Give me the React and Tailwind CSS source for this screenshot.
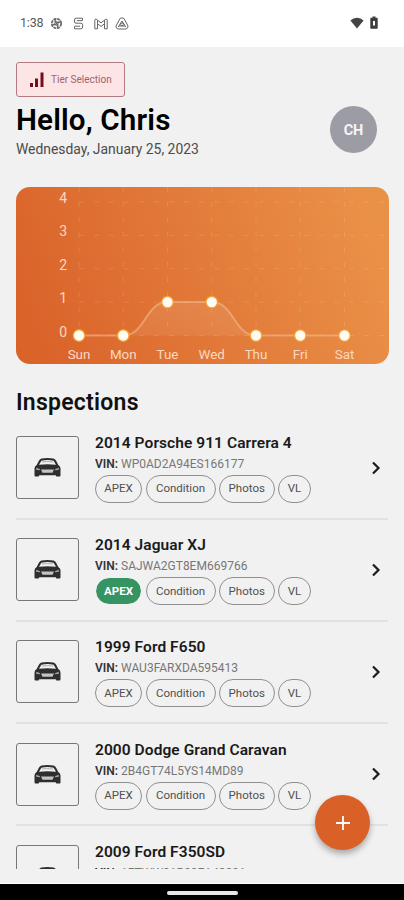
import React from 'react';

const days = ['Sun', 'Mon', 'Tue', 'Wed', 'Thu', 'Fri', 'Sat'];
const counts = [0, 0, 1, 1, 0, 0, 0];

const inspections = [
  { title: '2014 Porsche 911 Carrera 4', vin: 'WP0AD2A94ES166177', apex: false },
  { title: '2014 Jaguar XJ', vin: 'SAJWA2GT8EM669766', apex: true },
  { title: '1999 Ford F650', vin: 'WAU3FARXDA595413', apex: false },
  { title: '2000 Dodge Grand Caravan', vin: '2B4GT74L5YS14MD89', apex: false },
  { title: '2009 Ford F350SD', vin: '1FTWW31R29EA48291', apex: false },
];

const StatusBar = () => (
  <div className="flex h-[47px] shrink-0 items-center bg-white pl-5 pr-[26px] text-[#666]">
    <span className="w-[30px] text-[12.5px] leading-none tracking-[-0.2px] text-[#5a5a5a]">1:38</span>
    {/* Notifications */}
    <svg width="13" height="13" viewBox="0 0 13 13" fill="none" stroke="currentColor" strokeWidth="1.7">
      <circle cx="6.5" cy="6.5" r="4.7" strokeDasharray="3 0.7" />
      <path d="M4 1.5 6.5 5M11 4 7.5 6.5M9 11.5 6.5 8M1.5 9 5 6.5M4.5 4.5l4 4M8.5 4.5l-4 4" strokeWidth="1.2" />
    </svg>
    <svg className="ml-[10px]" width="11" height="13" viewBox="0 0 11 13" fill="none" stroke="currentColor" strokeWidth="1">
      <path d="M9.5 3.5V1.2H3.2Q1.5 1.2 1.5 3V5Q1.5 6.2 3 6.2H8Q9.6 6.2 9.6 7.8V10Q9.6 11.8 7.8 11.8H1.5V9.4M3.8 3.6H9.5M1.5 9.2H7.2" />
    </svg>
    <svg className="ml-[10px]" width="14" height="12" viewBox="0 0 14 12" fill="none" stroke="currentColor" strokeWidth="1">
      <path d="M.8 10.8V2.2Q.8.8 2.2 1.2L7 4.8 11.8 1.2Q13.2.8 13.2 2.2V10.8H10.5V5.8L7 8.4 3.5 5.8V10.8ZM3.5 2.2V5.8M10.5 2.2V5.8" />
    </svg>
    <svg className="ml-[7px]" width="14" height="13" viewBox="0 0 14 13" fill="none" stroke="currentColor" strokeWidth="1">
      <path d="M5 1.5Q7 .2 9 1.5L13 9Q13.3 11.4 11 12H3Q.7 11.4 1 9Z" />
      <path d="M7 4 3.2 10M7 4l3.8 6M4 9H10" />
      <circle cx="7" cy="7.3" r="1.4" />
    </svg>
    <div className="grow" />
    <svg className="-mt-0.5" width="14" height="12" viewBox="0 0 14 12" fill="#444">
      <path d="M7 11.5.4 3.4Q3.2.8 7 .8t6.6 2.6Z" />
    </svg>
    <svg className="-mt-0.5 ml-[6px]" width="8" height="13" viewBox="0 0 8 13" fill="#3d3d3d">
      <path fillRule="evenodd" d="M2.5.5h3v1.2H7Q7.7 1.7 7.7 2.5V12Q7.7 12.7 7 12.7H1Q.3 12.7.3 12V2.5Q.3 1.7 1 1.7H2.5ZM3 5V9.5H5V5Z" />
    </svg>
  </div>
);

const Chart = () => {
  const x = (i) => 63 + i * 44.25;
  const y = (v) => 148.5 - v * 33.4;
  const line = counts
    .map((c, i) => {
      if (i === 0) return `M${x(0)} ${y(c)}`;
      const mid = (x(i - 1) + x(i)) / 2;
      return `C${mid} ${y(counts[i - 1])} ${mid} ${y(c)} ${x(i)} ${y(c)}`;
    })
    .join(' ');

  return (
    <svg className="mt-[29px] block shrink-0 rounded-[14px]" width="373" height="177" viewBox="0 0 373 177">
      <defs>
        <linearGradient id="card" gradientUnits="userSpaceOnUse" x1="20" y1="150" x2="353" y2="28">
          <stop offset="0" stopColor="#da632a" />
          <stop offset="1" stopColor="#ea9148" />
        </linearGradient>
        <linearGradient id="area" x1="0" y1="0" x2="0" y2="1">
          <stop offset="0" stopColor="#fff" stopOpacity="0.1" />
          <stop offset="1" stopColor="#fff" stopOpacity="0.07" />
        </linearGradient>
      </defs>
      <rect width="373" height="177" fill="url(#card)" />
      <g stroke="#fff" strokeOpacity="0.13" strokeDasharray="5 10">
        {[0, 1, 2, 3, 4].map((v) => (
          <line key={v} x1="63" x2="373" y1={y(v)} y2={y(v)} />
        ))}
        {days.map((d, i) => (
          <line key={d} x1={x(i)} x2={x(i)} y1="0" y2="148" />
        ))}
      </g>
      <path d={`${line} Z`} fill="url(#area)" />
      <path d={line} fill="none" stroke="#f3b78a" strokeOpacity="0.6" strokeWidth="2" />
      {counts.map((c, i) => (
        <circle key={i} cx={x(i)} cy={y(c)} r="5.8" fill="#fffaf2" stroke="#f3a02c" strokeWidth="1.3" />
      ))}
      <g fill="#fbd8c2" fontFamily="Roboto, sans-serif">
        {[0, 1, 2, 3, 4].map((v) => (
          <text key={v} x="51" y={y(v) + 1} textAnchor="end" fontSize="14">{v}</text>
        ))}
        {days.map((d, i) => (
          <text key={d} x={x(i)} y="172" textAnchor="middle" fontSize="13.4">{d}</text>
        ))}
      </g>
    </svg>
  );
};

const CarIcon = () => (
  <svg width="27" height="19" viewBox="0 0 27 19" fill="#2e2e2e">
    <path
      fillRule="evenodd"
      d="M7.5.5Q13.500-.5 19.5.5Q21 .8 22 2.500L24.300 7Q26.500 8 26.500 10.500V17.500Q26.500 18.500 25.500 18.500H22.800Q21.800 18.500 21.800 17.300H5.200Q5.200 18.500 4.200 18.500H1.500Q.5 18.500.5 17.500V10.500Q.5 8 2.700 7L5 2.500Q6 .8 7.5.5ZM7.400 2.700 5 6.800Q13.500 5.800 22 6.800L19.600 2.700Q13.500 1.500 7.400 2.700Z"
    />
    <path d="M8 4Q13.500 3.200 19 4" fill="none" stroke="#999" strokeWidth="0.8" />
    <path d="M7 11.500H20L18.500 14.800H8.500Z" fill="#c4c4c4" />
    <path d="M2.200 9.800 6.200 11.200 5.500 12.300 2.200 11.700ZM24.800 9.800 20.800 11.200 21.500 12.300 24.800 11.700Z" fill="#a5a5a5" />
  </svg>
);

const chip = 'flex h-7 items-center justify-center rounded-full border border-[#8f8f8f] text-[11.5px] text-[#505050]';

const InspectionRow = ({ item }) => (
  <div className="flex h-[102.2px] shrink-0 border-b-2 border-[#e2e2e2] pt-[18.5px]">
    <div className="flex h-[63px] w-[63px] shrink-0 items-center justify-center rounded-[3px] border border-[#777]">
      <CarIcon />
    </div>
    <div className="ml-4 grow">
      <h3 className="whitespace-nowrap text-[15.5px] font-semibold leading-[14px] tracking-[0.07px] text-[#1a1a1a]">{item.title}</h3>
      <p className="mt-[7px] whitespace-nowrap text-[12px] leading-[14px] text-[#777]">
        <span className="font-semibold text-[#333]">VIN:</span> {item.vin}
      </p>
      <div className="mt-1 flex gap-[3.5px]">
        {item.apex ? (
          <span className="flex h-7 w-[47px] items-center justify-center rounded-full border border-[#f1f1f1] bg-[#369463] bg-clip-padding text-[11.5px] font-bold text-white">APEX</span>
        ) : (
          <span className={`${chip} w-[47px]`}>APEX</span>
        )}
        <span className={`${chip} w-[70px]`}>Condition</span>
        <span className={`${chip} w-[55.5px]`}>Photos</span>
        <span className={`${chip} w-[33px]`}>VL</span>
      </div>
    </div>
    <svg className="mr-[6px] mt-[24.5px]" width="12" height="14" viewBox="0 0 12 14" fill="none" stroke="#1c1c1c" strokeWidth="2.2">
      <path d="M3 1.5 8.5 7 3 12.5" />
    </svg>
  </div>
);

const App = () => {
  return (
    <div className="relative flex h-[900px] w-[404px] flex-col overflow-hidden bg-[#f1f1f1] font-['Roboto',sans-serif]">
      <StatusBar />
      <div className="flex h-[822px] shrink-0 flex-col overflow-hidden px-4">
        <button className="mt-[15px] flex h-[35px] w-[109px] shrink-0 items-center rounded-[3px] border border-[#b47a82] bg-[#fde4e5] pl-[13px]">
          <svg width="14" height="15" viewBox="0 0 14 15" fill="#7a0c1c">
            <path d="M0 11h3v4H0zM5 6.5h3V15H5zM10.5 0.5h3V15h-3z" />
          </svg>
          <span className="ml-[7px] text-[10px] text-[#a3626c]">Tier Selection</span>
        </button>

        {/* Greeting */}
        <div className="flex h-[61px] shrink-0 justify-between">
          <div>
            <h1 className="mt-[5px] text-[29.6px] font-semibold leading-[36px] tracking-[0.15px] text-black">Hello, Chris</h1>
            <p className="mt-[3px] text-[13.9px] leading-4 text-[#4c4c4c]">Wednesday, January 25, 2023</p>
          </div>
          <div className="mr-[11px] mt-[9px] flex h-[47px] w-[47px] items-center justify-center rounded-full bg-[#9c9ca4] pt-0.5 text-[14.5px] font-bold text-[#f5f5f7]">
            CH
          </div>
        </div>

        <Chart />

        <h2 className="mt-[25px] shrink-0 text-[23px] font-semibold leading-7 tracking-[0.25px] text-[#111]">Inspections</h2>
        <div className="mt-[0.5px]">
          {inspections.map((item) => (
            <InspectionRow key={item.vin} item={item} />
          ))}
        </div>
      </div>

      <button className="absolute left-[315px] top-[795px] flex h-[55px] w-[55px] items-center justify-center rounded-full bg-[#d96128] shadow-[0_4px_6px_rgba(0,0,0,0.3)]">
        <svg width="14" height="14" viewBox="0 0 14 14" stroke="#fff" strokeWidth="1.8">
          <path d="M7 0v14M0 7h14" />
        </svg>
      </button>

      {/* Android navigation bar */}
      <div className="mt-auto flex h-[17px] shrink-0 justify-center border-t border-white bg-black pt-[7px]">
        <div className="h-[4px] w-[71px] rounded-full bg-[#e8e8e8]" />
      </div>
    </div>
  );
};

export default App;
